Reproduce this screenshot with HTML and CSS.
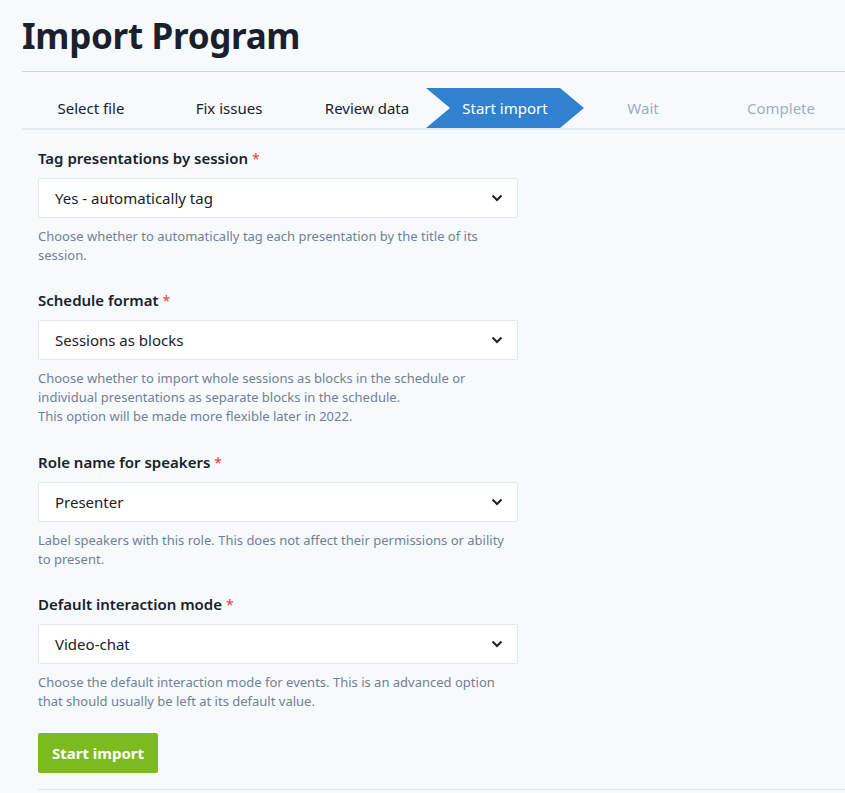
FILE: index.html
```html
<!DOCTYPE html>
<html lang="en">
<head>
<meta charset="utf-8">
<title>Import Program</title>
<link rel="stylesheet" href="styles.css">
</head>
<body>
<main class="page">
  <h1 class="title">Import Program</h1>
  <nav class="steps">
    <div class="step done">Select file</div>
    <div class="step done">Fix issues</div>
    <div class="step done">Review data</div>
    <div class="step active">Start import</div>
    <div class="step todo">Wait</div>
    <div class="step todo">Complete</div>
  </nav>
  <form class="form">
    <div class="field">
      <label class="label">Tag presentations by session <span class="req">*</span></label>
      <div class="select"><span>Yes - automatically tag</span><svg class="chev" width="12" height="8" viewBox="0 0 12 8"><path d="M1.5 1.5 L6 6 L10.5 1.5" fill="none" stroke="#1a202c" stroke-width="2"/></svg></div>
      <p class="help">Choose whether to automatically tag each presentation by the title of its session.</p>
    </div>
    <div class="field">
      <label class="label">Schedule format <span class="req">*</span></label>
      <div class="select"><span>Sessions as blocks</span><svg class="chev" width="12" height="8" viewBox="0 0 12 8"><path d="M1.5 1.5 L6 6 L10.5 1.5" fill="none" stroke="#1a202c" stroke-width="2"/></svg></div>
      <p class="help">Choose whether to import whole sessions as blocks in the schedule or individual presentations as separate blocks in the schedule.<br>This option will be made more flexible later in 2022.</p>
    </div>
    <div class="field">
      <label class="label">Role name for speakers <span class="req">*</span></label>
      <div class="select"><span>Presenter</span><svg class="chev" width="12" height="8" viewBox="0 0 12 8"><path d="M1.5 1.5 L6 6 L10.5 1.5" fill="none" stroke="#1a202c" stroke-width="2"/></svg></div>
      <p class="help">Label speakers with this role. This does not affect their permissions or ability to present.</p>
    </div>
    <div class="field last">
      <label class="label">Default interaction mode <span class="req">*</span></label>
      <div class="select"><span>Video-chat</span><svg class="chev" width="12" height="8" viewBox="0 0 12 8"><path d="M1.5 1.5 L6 6 L10.5 1.5" fill="none" stroke="#1a202c" stroke-width="2"/></svg></div>
      <p class="help">Choose the default interaction mode for events. This is an advanced option that should usually be left at its default value.</p>
    </div>
    <div class="actions">
      <button type="button" class="btn">Start import</button>
    </div>
  </form>
</main>
</body>
</html>
```
FILE: styles.css
```css
html, body {
  margin: 0;
  padding: 0;
  background: #f7fafc;
  overflow: hidden;
}
body {
  font-family: "Noto Sans", "Open Sans", sans-serif;
  color: #1a202c;
}
.page {
  padding-left: 22px;
  width: 830px;
}
.title {
  margin: 0;
  padding-top: 14px;
  height: 72px;
  box-sizing: border-box;
  font-size: 35px;
  line-height: 43px;
  font-weight: 700;
  letter-spacing: -0.3px;
  border-bottom: 1px solid #cbd5e0;
}
.steps {
  display: grid;
  grid-template-columns: repeat(6, 138px);
  padding-top: 16px;
  border-bottom: 2px solid #e2e8f0;
  margin-bottom: 17px;
}
.step {
  height: 40px;
  display: flex;
  align-items: center;
  justify-content: center;
  font-size: 15px;
  white-space: nowrap;
}
.step.done { color: #1a202c; }
.step.todo { color: #a0aec0; }
.step.active {
  color: #ffffff;
  background: #3182ce;
  margin-left: -10px;
  margin-right: -10px;
  padding: 0 24px;
  clip-path: polygon(0 0, 134px 0, 158px 50%, 134px 100%, 0 100%, 24px 50%);
}
.form {
  padding-left: 16px;
  width: 480px;
}
.field {
  margin-bottom: 24.3px;
}
.field.last {
  margin-bottom: 22px;
}
.label {
  display: block;
  font-size: 15px;
  line-height: 22px;
  font-weight: 600;
  margin-bottom: 8px;
}
.req {
  color: #e53e3e;
  font-weight: 400;
  font-size: 14px;
}
.select {
  height: 40px;
  box-sizing: border-box;
  background: #ffffff;
  border: 1px solid #e2e8f0;
  border-radius: 2px;
  display: flex;
  align-items: center;
  justify-content: space-between;
  padding: 0 14px 0 16px;
  font-size: 15px;
}
.chev { display: block; }
.help {
  margin: 9px 0 0;
  font-size: 13px;
  line-height: 19px;
  color: #718096;
}
.actions {
  padding-bottom: 16px;
  border-bottom: 1px solid #e2e8f0;
  width: 810px;
}
.btn {
  height: 40px;
  width: 120px;
  border: none;
  border-radius: 2px;
  background: #7cbb1f;
  color: #ffffff;
  font-family: inherit;
  font-size: 15px;
  font-weight: 700;
  padding: 0;
}
```
